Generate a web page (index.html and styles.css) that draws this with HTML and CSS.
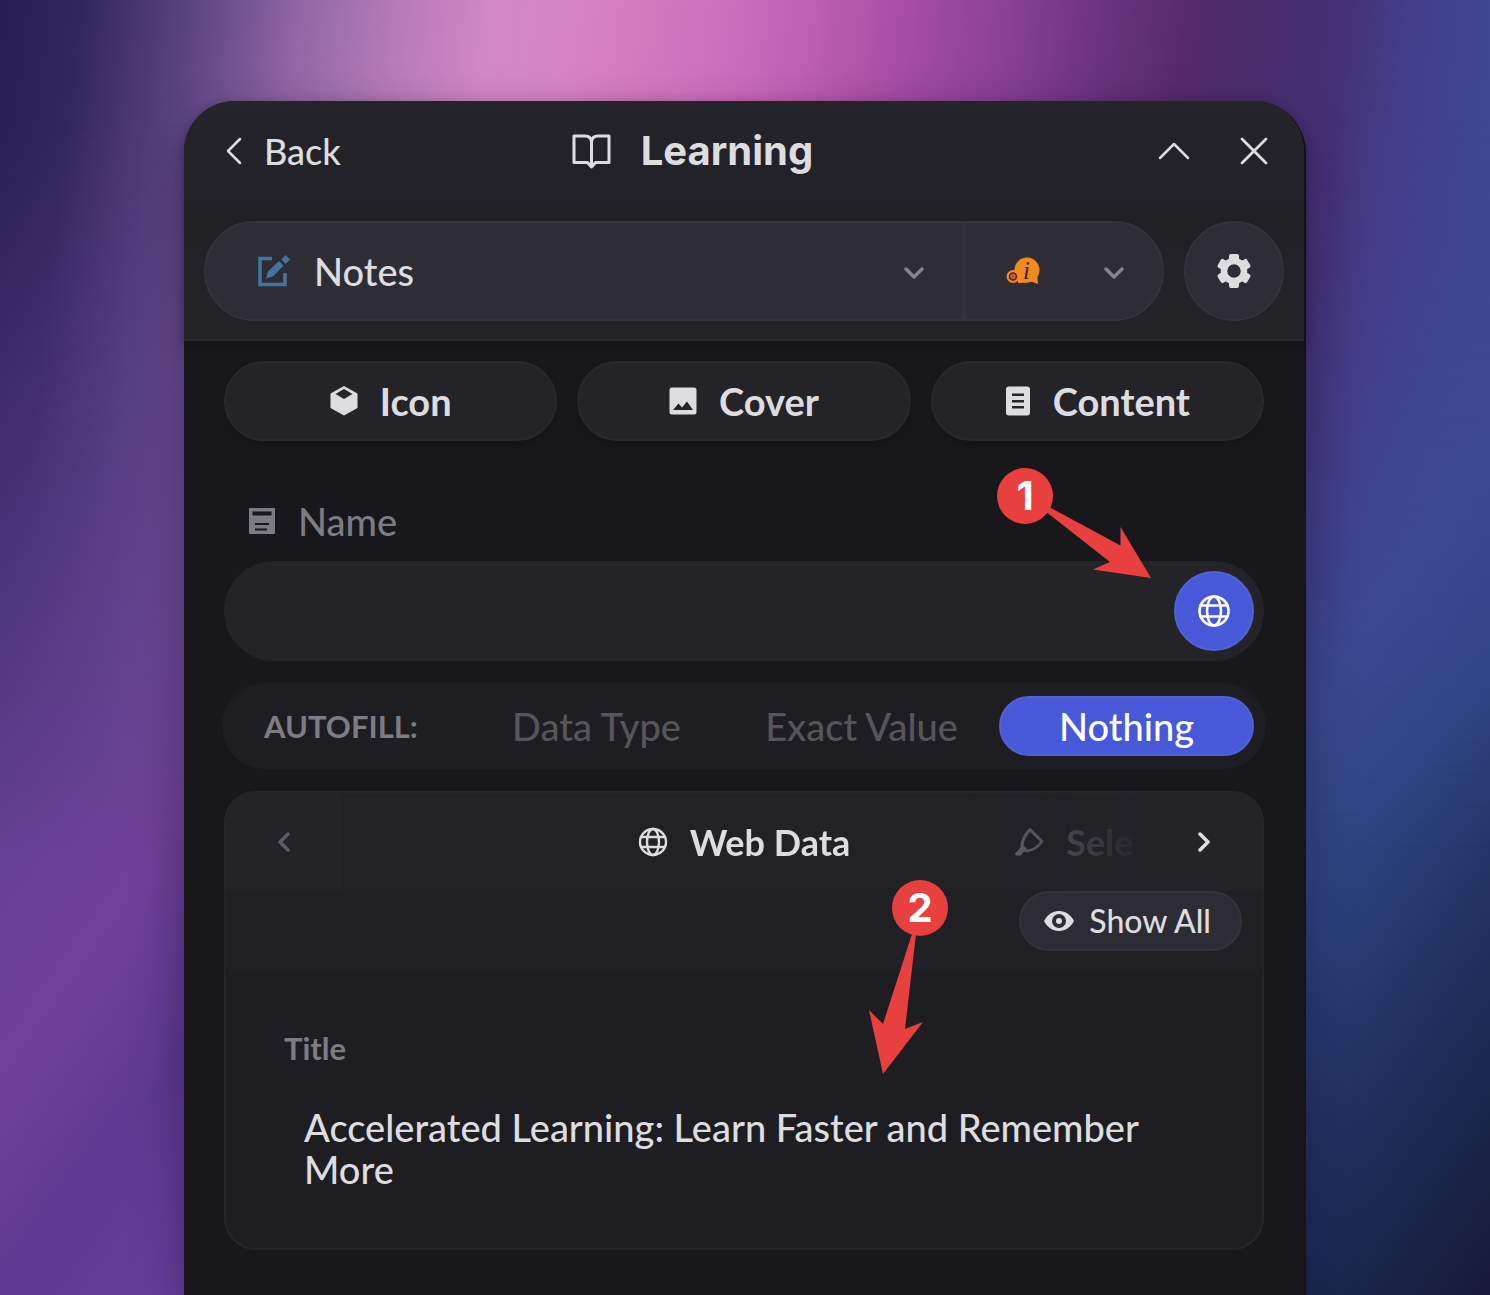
FILE: index.html
```html
<!DOCTYPE html>
<html lang="en">
<head>
<meta charset="utf-8">
<meta name="viewport" content="width=device-width, initial-scale=1">
<title>Learning</title>
<link rel="stylesheet" href="styles.css">
</head>
<body>
<main class="panel">
  <header class="panel-head">
    <div class="title-bar">
      <button class="plain back" type="button">
        <svg width="20" height="30" viewBox="0 0 20 30" class="line"><path d="M16 3 4 15l12 12" stroke-width="2.5"/></svg>
        Back
      </button>
      <h1 class="title">
        <svg width="40" height="40" viewBox="0 0 40 40" class="line"><path d="M3 5h11q6 0 6.500 6Q21 5 27 5h11v26.500H24.500L20.500 36l-4-4.500H3zM20.500 10v24" stroke-width="3"/></svg>
        Learning
      </h1>
      <div class="window-actions">
        <button class="plain" type="button" aria-label="Collapse"><svg width="32" height="32" viewBox="0 0 32 32" class="line"><path d="M2 23 16 9l14 14" stroke-width="2.500"/></svg></button>
        <button class="plain" type="button" aria-label="Close"><svg width="32" height="32" viewBox="0 0 32 32" class="line"><path d="M4 4l24 24M28 4 4 28" stroke-width="2.800"/></svg></button>
      </div>
    </div>
    <div class="source-bar">
      <div class="source-group">
        <button class="source source-main" type="button">
          <svg width="32" height="32" viewBox="0 0 32 32" class="blue"><path d="M14 3.500H2v26h25V18" fill="none" stroke="currentColor" stroke-width="3.500"/><path d="M8 23.500 10 16.500 21 6l4.500 4.500L15 21.500zM23.500 4.500 27.500 0 32 4.500 27.500 9z" fill="currentColor"/></svg>
          <span class="source-name">Notes</span>
          <svg width="20" height="16" viewBox="0 -4 20 16" class="line muted"><path d="M2 2l8 8 8-8" stroke-width="3.500"/></svg>
        </button>
        <button class="source source-side" type="button" aria-label="Template">
          <svg width="34" height="30" viewBox="0 0 34 30"><g fill="#f28b1d"><circle cx="21" cy="14" r="12.500"/><circle cx="7" cy="20.500" r="6.500"/><path d="M12 22l4-2 6 6.500-10 .5zM31 18l1 10-8-3z"/></g><circle cx="7" cy="20.500" r="3.500" fill="#c9553b" stroke="#4a2a20" stroke-width="1.500"/><text x="17" y="23" class="info-mark">i</text></svg>
          <svg width="20" height="16" viewBox="0 -4 20 16" class="line muted"><path d="M2 2l8 8 8-8" stroke-width="3.500"/></svg>
        </button>
      </div>
      <button class="settings" type="button" aria-label="Settings">
        <svg width="36" height="36" viewBox="-18 -18 36 36"><circle r="10" fill="none" stroke="currentColor" stroke-width="6.500"/><g fill="currentColor"><rect x="-5" y="-17" width="10" height="7" rx="2"/><rect x="-5" y="-17" width="10" height="7" rx="2" transform="rotate(60)"/><rect x="-5" y="-17" width="10" height="7" rx="2" transform="rotate(120)"/><rect x="-5" y="-17" width="10" height="7" rx="2" transform="rotate(180)"/><rect x="-5" y="-17" width="10" height="7" rx="2" transform="rotate(240)"/><rect x="-5" y="-17" width="10" height="7" rx="2" transform="rotate(300)"/></g></svg>
      </button>
    </div>
  </header>

  <div class="panel-body">
    <div class="parts">
      <button class="part" type="button"><svg width="28" height="30" viewBox="0 0 28 30"><path fill-rule="evenodd" d="M14 0 27.500 7.500v14.500L14 29.500.5 22V7.500zM14 3 5.500 8 14 13l8.500-5z" fill="currentColor"/></svg>Icon</button>
      <button class="part" type="button"><svg width="28" height="28" viewBox="0 0 28 28"><path fill-rule="evenodd" d="M3 .5h22a2.500 2.500 0 0 1 2.500 2.500v22a2.500 2.500 0 0 1-2.500 2.500H3A2.500 2.500 0 0 1 .5 25V3A2.500 2.500 0 0 1 3 .5zM4 23h20l-6-8.500-5 6-3.500-4z" fill="currentColor"/></svg>Cover</button>
      <button class="part" type="button"><svg width="26" height="30" viewBox="0 0 26 30"><path fill-rule="evenodd" d="M4 .5h18a3 3 0 0 1 3 3v23a3 3 0 0 1-3 3H4a3 3 0 0 1-3-3v-23a3 3 0 0 1 3-3zM7 7.500V10h12V7.500zM7 14v2.500h12V14zM7 20v2.500h12V20z" fill="currentColor"/></svg>Content</button>
    </div>

    <div class="field">
      <label class="field-label" for="name"><svg width="28" height="28" viewBox="0 0 28 28"><path fill-rule="evenodd" d="M2 1h24a1 1 0 0 1 1 1v24a1 1 0 0 1-1 1H2a1 1 0 0 1-1-1V2a1 1 0 0 1 1-1zM4.500 4.500v4h19v-4zM7 16v2h14v-2zM7 21.500v2h12v-2z" fill="currentColor"/></svg>Name</label>
      <div class="field-box">
        <input class="field-input" id="name" type="text">
        <button class="globe-button" type="button" aria-label="Web data"><svg width="34" height="34" viewBox="0 0 34 34" class="line"><g stroke-width="2.600"><circle cx="17" cy="17" r="14.500"/><ellipse cx="17" cy="17" rx="7" ry="14.500"/><path d="M3.500 11.500h27M3.500 22.500h27"/></g></svg></button>
      </div>
      <div class="callout callout-first"><svg width="156" height="112" viewBox="2 0 156 112"><path d="M56 40 125.500 77.500V59L156 110 98 101.500l17-7.500L50 43z" fill="currentColor"/></svg><span class="callout-number">1</span></div>
    </div>

    <div class="autofill" role="group" aria-label="Autofill">
      <span class="autofill-label">AUTOFILL:</span>
      <div class="segments">
        <button class="segment" type="button">Data Type</button>
        <button class="segment" type="button">Exact Value</button>
        <button class="segment segment-on" type="button">Nothing</button>
      </div>
    </div>

    <section class="card">
      <div class="card-tabs">
        <button class="tab-arrow tab-arrow-off" type="button" aria-label="Previous"><svg width="14" height="20" viewBox="0 0 14 20" class="line"><path d="M11 2 3 10l8 8" stroke-width="3.500"/></svg></button>
        <div class="tab-window">
          <button class="tab tab-on" type="button"><svg width="30" height="30" viewBox="0 0 30 30" class="line"><g stroke-width="2.400"><circle cx="15" cy="15" r="13"/><ellipse cx="15" cy="15" rx="6" ry="13"/><path d="M3 10h24M3 20h24"/></g></svg>Web Data</button>
          <button class="tab tab-next" type="button"><svg width="30" height="30" viewBox="0 0 30 30" class="line"><path d="M16 2.500 28 14.500Q22 23 13 24l-5-5q0-8 8-16.500z" stroke-width="3"/><path d="M1 26.500 8 19l5 5-4 1.500-2 3H2z" fill="currentColor" stroke="none"/></svg>Sele</button>
        </div>
        <button class="tab-arrow" type="button" aria-label="Next"><svg width="14" height="20" viewBox="0 0 14 20" class="line"><path d="M3 2l8 8-8 8" stroke-width="3.500"/></svg></button>
      </div>
      <div class="card-tools">
        <button class="show-all" type="button"><svg width="30" height="22" viewBox="0 0 30 22"><path fill-rule="evenodd" d="M15 1C23 1 28 7 30 11c-2 4-7 10-15 10S2 15 0 11C2 7 7 1 15 1zm0 3a7 7 0 1 0 0 14 7 7 0 0 0 0-14z" fill="currentColor"/><circle cx="15" cy="11" r="3" fill="currentColor"/></svg>Show All</button>
      </div>
      <div class="card-body">
        <h2 class="entry-name">Title</h2>
        <p class="entry-value">Accelerated Learning: Learn Faster and Remember More</p>
      </div>
      <div class="callout callout-second"><svg width="80" height="196" viewBox="0 0 80 196"><path d="M44 54h4L37 149l18-7-40 52L1 130l14 14z" fill="currentColor"/></svg><span class="callout-number">2</span></div>
    </section>
  </div>
</main>
</body>
</html>
```
FILE: styles.css
```css
* {
  box-sizing: border-box;
}

body {
  display: flex;
  position: relative;
  isolation: isolate;
  min-height: 100vh;
  margin: 0;
  padding: 101px 184px 0;
  overflow-x: hidden;
  color: #dddde0;
  font-family: Lato, "Open Sans", sans-serif;
  font-size: 38px;
  font-weight: 500;
  line-height: 42px;
  background: linear-gradient(126deg, #53388a 0%, #5a3e8e 18%, #6f4299 32%, #5f3a90 39%, #6a40a0 48%, #4c3a86 62%, #3e4790 70%, #3a4c90 75%, #2d4482 81%, #233262 88%, #1b2850 93%, #161a38 100%);
}

body::before {
  content: "";
  position: absolute;
  inset: 0;
  z-index: -1;
  background: linear-gradient(97deg, #281d52 0%, #33275e 5%, #5c4683 12%, #8f66a3 18%, #b57ab8 24%, #d287c8 30%, #d684c6 35%, #d27ac0 39%, #cc6cbc 45%, #bf60b4 49%, #a54ea4 55%, #8b4197 61%, #6b337f 67%, #562b6d 72%, #472d6c 77%, #443278 82%, #42408a 86%, #3f4692 91%);
  mask-image: linear-gradient(#000 120px, transparent 850px);
}

button,
input {
  margin: 0;
  padding: 0;
  border: 0;
  background: none;
  color: inherit;
  font: inherit;
}

svg {
  display: block;
  flex: none;
}

.line {
  fill: none;
  stroke: currentColor;
  stroke-linecap: round;
  stroke-linejoin: round;
}

.muted {
  color: #85848d;
}

.blue {
  color: #41779f;
}

.panel {
  flex: 1;
  min-width: 0;
  border-right: 2px solid #151419;
  border-radius: 52px 52px 0 0;
  background: #18171c;
  box-shadow: 0 20px 50px rgba(20, 10, 40, 0.4);
}

.panel-head {
  padding: 0 20px 18px;
  border-bottom: 2px solid #2a292f;
  border-radius: 50px 50px 0 0;
  background: linear-gradient(#25242b, #212025 50%, #242328);
  box-shadow: 0 4px 12px rgba(0, 0, 0, 0.3);
}

.title-bar {
  display: grid;
  grid-template-columns: 1fr auto 1fr;
  align-items: center;
  height: 100px;
  padding: 0 14px 0 20px;
}

.plain {
  display: flex;
  align-items: center;
}

.back {
  gap: 20px;
  font-size: 36px;
}

.title {
  display: flex;
  align-items: center;
  gap: 30px;
  margin: 0;
  padding-right: 110px;
  font-family: Inter, sans-serif;
  font-size: 40px;
  font-weight: 700;
}

.window-actions {
  display: flex;
  justify-content: flex-end;
  gap: 48px;
}

.source-bar {
  display: flex;
  gap: 20px;
  margin-top: 20px;
}

.source-group {
  display: flex;
  flex: 1;
  height: 100px;
  overflow: hidden;
  border: 2px solid #34333a;
  border-radius: 50px;
  background: #2e2d36;
}

.source {
  display: flex;
  align-items: center;
}

.source-main {
  flex: 1;
  gap: 24px;
  padding: 0 38px 0 52px;
  border-right: 4px solid #34333a;
  text-align: left;
}

.source-name {
  flex: 1;
}

.source-side {
  justify-content: space-between;
  width: 196px;
  padding: 0 38px 0 40px;
}

.info-mark {
  fill: #33261c;
  font: italic 400 25px "Liberation Serif", serif;
}

.settings {
  display: grid;
  place-items: center;
  width: 100px;
  height: 100px;
  border: 2px solid #34333a;
  border-radius: 50%;
  background: #2e2d36;
}

.panel-body {
  padding: 20px 40px 45px;
}

.parts {
  display: grid;
  grid-template-columns: repeat(3, 1fr);
  gap: 20px;
}

.part {
  display: flex;
  align-items: center;
  justify-content: center;
  gap: 22px;
  height: 80px;
  border: 2px solid #29282e;
  border-radius: 40px;
  background: #242328;
  box-shadow: 0 4px 10px rgba(0, 0, 0, 0.15);
  font-weight: 700;
}

.field {
  position: relative;
  margin-top: 60px;
}

.field-label {
  display: flex;
  align-items: center;
  gap: 22px;
  height: 40px;
  padding-left: 24px;
  color: #7d7c82;
}

.field-box {
  display: flex;
  align-items: center;
  height: 100px;
  margin-top: 20px;
  padding: 10px;
  border-radius: 50px;
  background: #242328;
}

.field-input {
  flex: 1;
  min-width: 0;
  height: 80px;
  padding: 0 30px;
  outline: 0;
}

.globe-button {
  display: grid;
  place-items: center;
  width: 80px;
  height: 80px;
  border: 2px solid #5261d6;
  border-radius: 50%;
  background: #4759d9;
  color: #fff;
}

.autofill {
  display: flex;
  align-items: center;
  justify-content: space-between;
  margin-top: 24px;
  padding: 11px 10px 11px 40px;
  border-radius: 41px;
  background: #1e1d22;
  box-shadow: 0 0 0 2px #1e1d22;
}

.autofill-label {
  color: #7d7c82;
  font-size: 31px;
  font-weight: 700;
}

.segments {
  display: flex;
  gap: 10px;
}

.segment {
  width: 255px;
  height: 60px;
  border-radius: 30px;
  color: #56555b;
}

.segment-on {
  border: 2px solid #5261d6;
  background: #4759d9;
  color: #fff;
}

.card {
  position: relative;
  margin-top: 24px;
  border: 2px solid #26252b;
  border-radius: 32px;
  background: #1e1d22;
}

.card-tabs {
  display: flex;
  height: 98px;
  border-radius: 30px 30px 0 0;
  background: #242328;
}

.tab-arrow {
  display: grid;
  place-items: center;
  width: 116px;
}

.tab-arrow-off {
  color: #5d5c62;
}

.tab-window {
  display: grid;
  flex: 1;
  grid-template-columns: 1fr auto 1fr;
  min-width: 0;
  overflow: hidden;
  background: #222126;
  mask-image: linear-gradient(90deg, #000 78%, transparent 100%);
}

.tab {
  display: flex;
  align-items: center;
  gap: 22px;
  min-width: 0;
  font-size: 36px;
  font-weight: 700;
  white-space: nowrap;
}

.tab-on {
  grid-column: 2;
}

.tab-next {
  padding-left: 164px;
  color: #717077;
}

.card-tools {
  display: flex;
  justify-content: flex-end;
  padding: 0 20px 18px;
  background: #212025;
}

.show-all {
  display: flex;
  align-items: center;
  gap: 15px;
  height: 60px;
  padding: 0 29px 0 23px;
  border: 2px solid #34333a;
  border-radius: 30px;
  background: #2d2c34;
  font-size: 32px;
}

.card-body {
  padding: 58px;
}

.entry-name {
  margin: 0;
  color: #7d7c82;
  font-size: 31px;
  font-weight: 700;
}

.entry-value {
  margin: 37px 20px 0;
}

.callout {
  position: absolute;
  color: #e7403e;
  pointer-events: none;
}

.callout-first {
  top: -33px;
  right: 111px;
}

.callout-second {
  top: 87px;
  right: 314px;
}

.callout-number {
  position: absolute;
  top: 0;
  width: 56px;
  height: 56px;
  border-radius: 50%;
  background: #e7403e;
  color: #fff;
  font: 700 40px/56px Inter, sans-serif;
  text-align: center;
}

.callout-first .callout-number {
  left: 0;
}

.callout-second .callout-number {
  right: 0;
}
```
